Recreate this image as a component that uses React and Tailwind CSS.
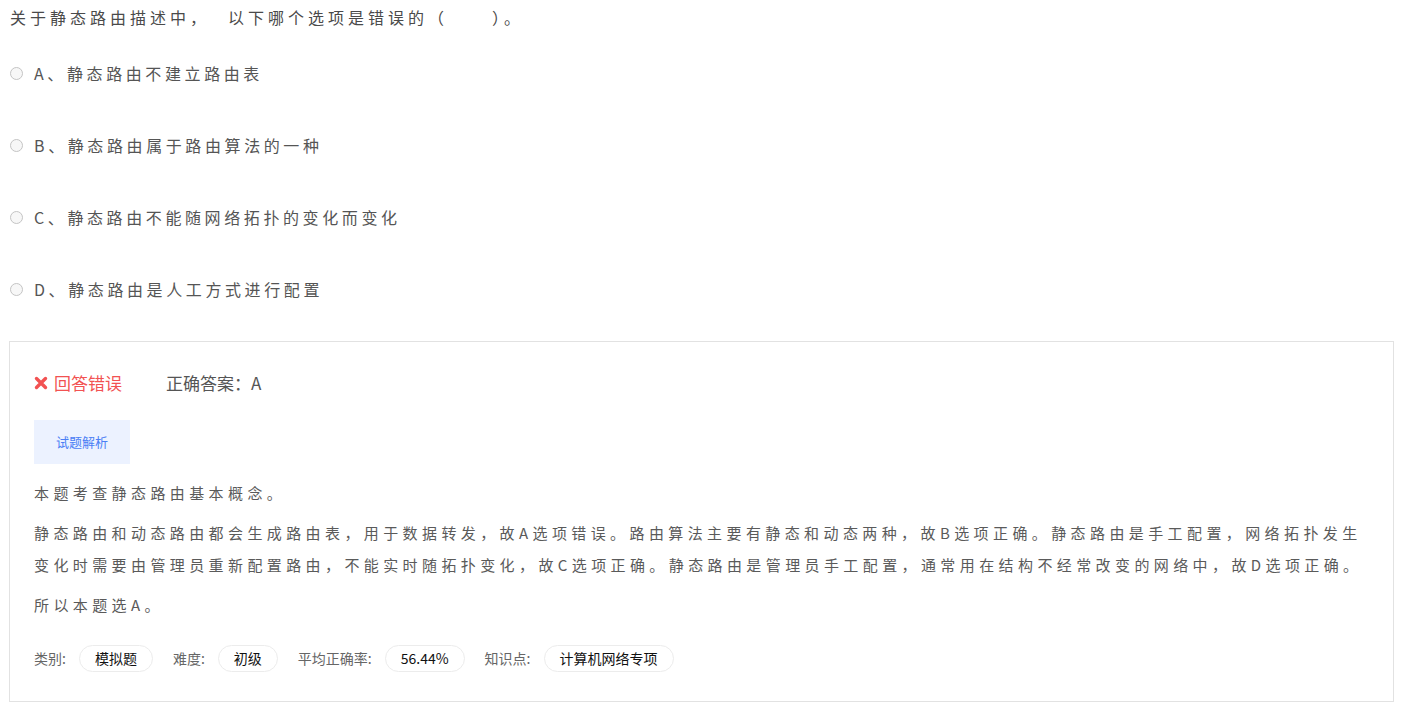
import React from "react";

const options = [
  ["A", "静态路由不建立路由表"],
  ["B", "静态路由属于路由算法的一种"],
  ["C", "静态路由不能随网络拓扑的变化而变化"],
  ["D", "静态路由是人工方式进行配置"],
];

const tags = [
  ["类别:", "模拟题"],
  ["难度:", "初级"],
  ["平均正确率:", "56.44%"],
  ["知识点:", "计算机网络专项"],
];

export default function App() {
  return (
    <div
      className="bg-white pl-[9px] pr-[7px] w-[1401px] h-[716px] overflow-hidden"
      style={{ fontFamily: '"Noto Sans CJK SC", "Noto Sans", sans-serif' }}
    >
      <div className="text-[16px] leading-[34px] tracking-[4px] text-[#4a4a4a] pl-[1px]">
        关于静态路由描述中，<span className="inline-block w-[18px]"></span>以下哪个选项是错误的（<span className="inline-block w-[44px]"></span>）。
      </div>
      <div className="mt-[3px]">
        {options.map(([k, t]) => (
          <div key={k} className="h-[72px] flex items-center">
            <span className="ml-[1px] w-[13px] h-[13px] rounded-full border border-[#c4c4c4] bg-[#f7f7f7] shrink-0"></span>
            <span className="ml-[11px] text-[16px] tracking-[3.6px] text-[#555]">
              {k}、{t}
            </span>
          </div>
        ))}
      </div>
      <div className="mt-[16px] border border-[#e2e2e2] px-[24px] pt-[29px] pb-[29px]">
        <div className="flex items-center h-[24px] text-[17px]">
          <span className="flex items-center text-[#f25252]">
            <svg width="14" height="14" viewBox="0 0 14 14" className="mr-[6px]">
              <path d="M2.5 2.5 L11.5 11.5 M11.5 2.5 L2.5 11.5" stroke="#f25252" strokeWidth="3.4" strokeLinecap="round" />
            </svg>
            回答错误
          </span>
          <span className="ml-[44px] text-[#555]">正确答案：A</span>
        </div>
        <div className="mt-[25px] w-[96px] h-[44px] bg-[#ecf2ff] text-[#4b7ff5] text-[13px] flex items-center justify-center">
          试题解析
        </div>
        <div className="text-[15px] tracking-[4.4px] leading-[32px] text-[#5a5a5a]">
          <p className="mt-[13px]">本题考查静态路由基本概念。</p>
          <p className="mt-[8px]">
            静态路由和动态路由都会生成路由表，用于数据转发，故A选项错误。路由算法主要有静态和动态两种，故B选项正确。静态路由是手工配置，网络拓扑发生变化时需要由管理员重新配置路由，不能实时随拓扑变化，故C选项正确。静态路由是管理员手工配置，通常用在结构不经常改变的网络中，故D选项正确。
          </p>
          <p className="mt-[8px]">所以本题选A。</p>
        </div>
        <div className="mt-[24px] flex items-center text-[14px]">
          {tags.map(([l, v], i) => (
            <div key={l} className={"flex items-center " + (i > 0 ? "ml-[20px]" : "")}>
              <span className="text-[#666]">{l}</span>
              <span className="ml-[13px] h-[27px] px-[15px] flex items-center rounded-full border border-[#ececec] text-[#111]">
                {v}
              </span>
            </div>
          ))}
        </div>
      </div>
    </div>
  );
}
